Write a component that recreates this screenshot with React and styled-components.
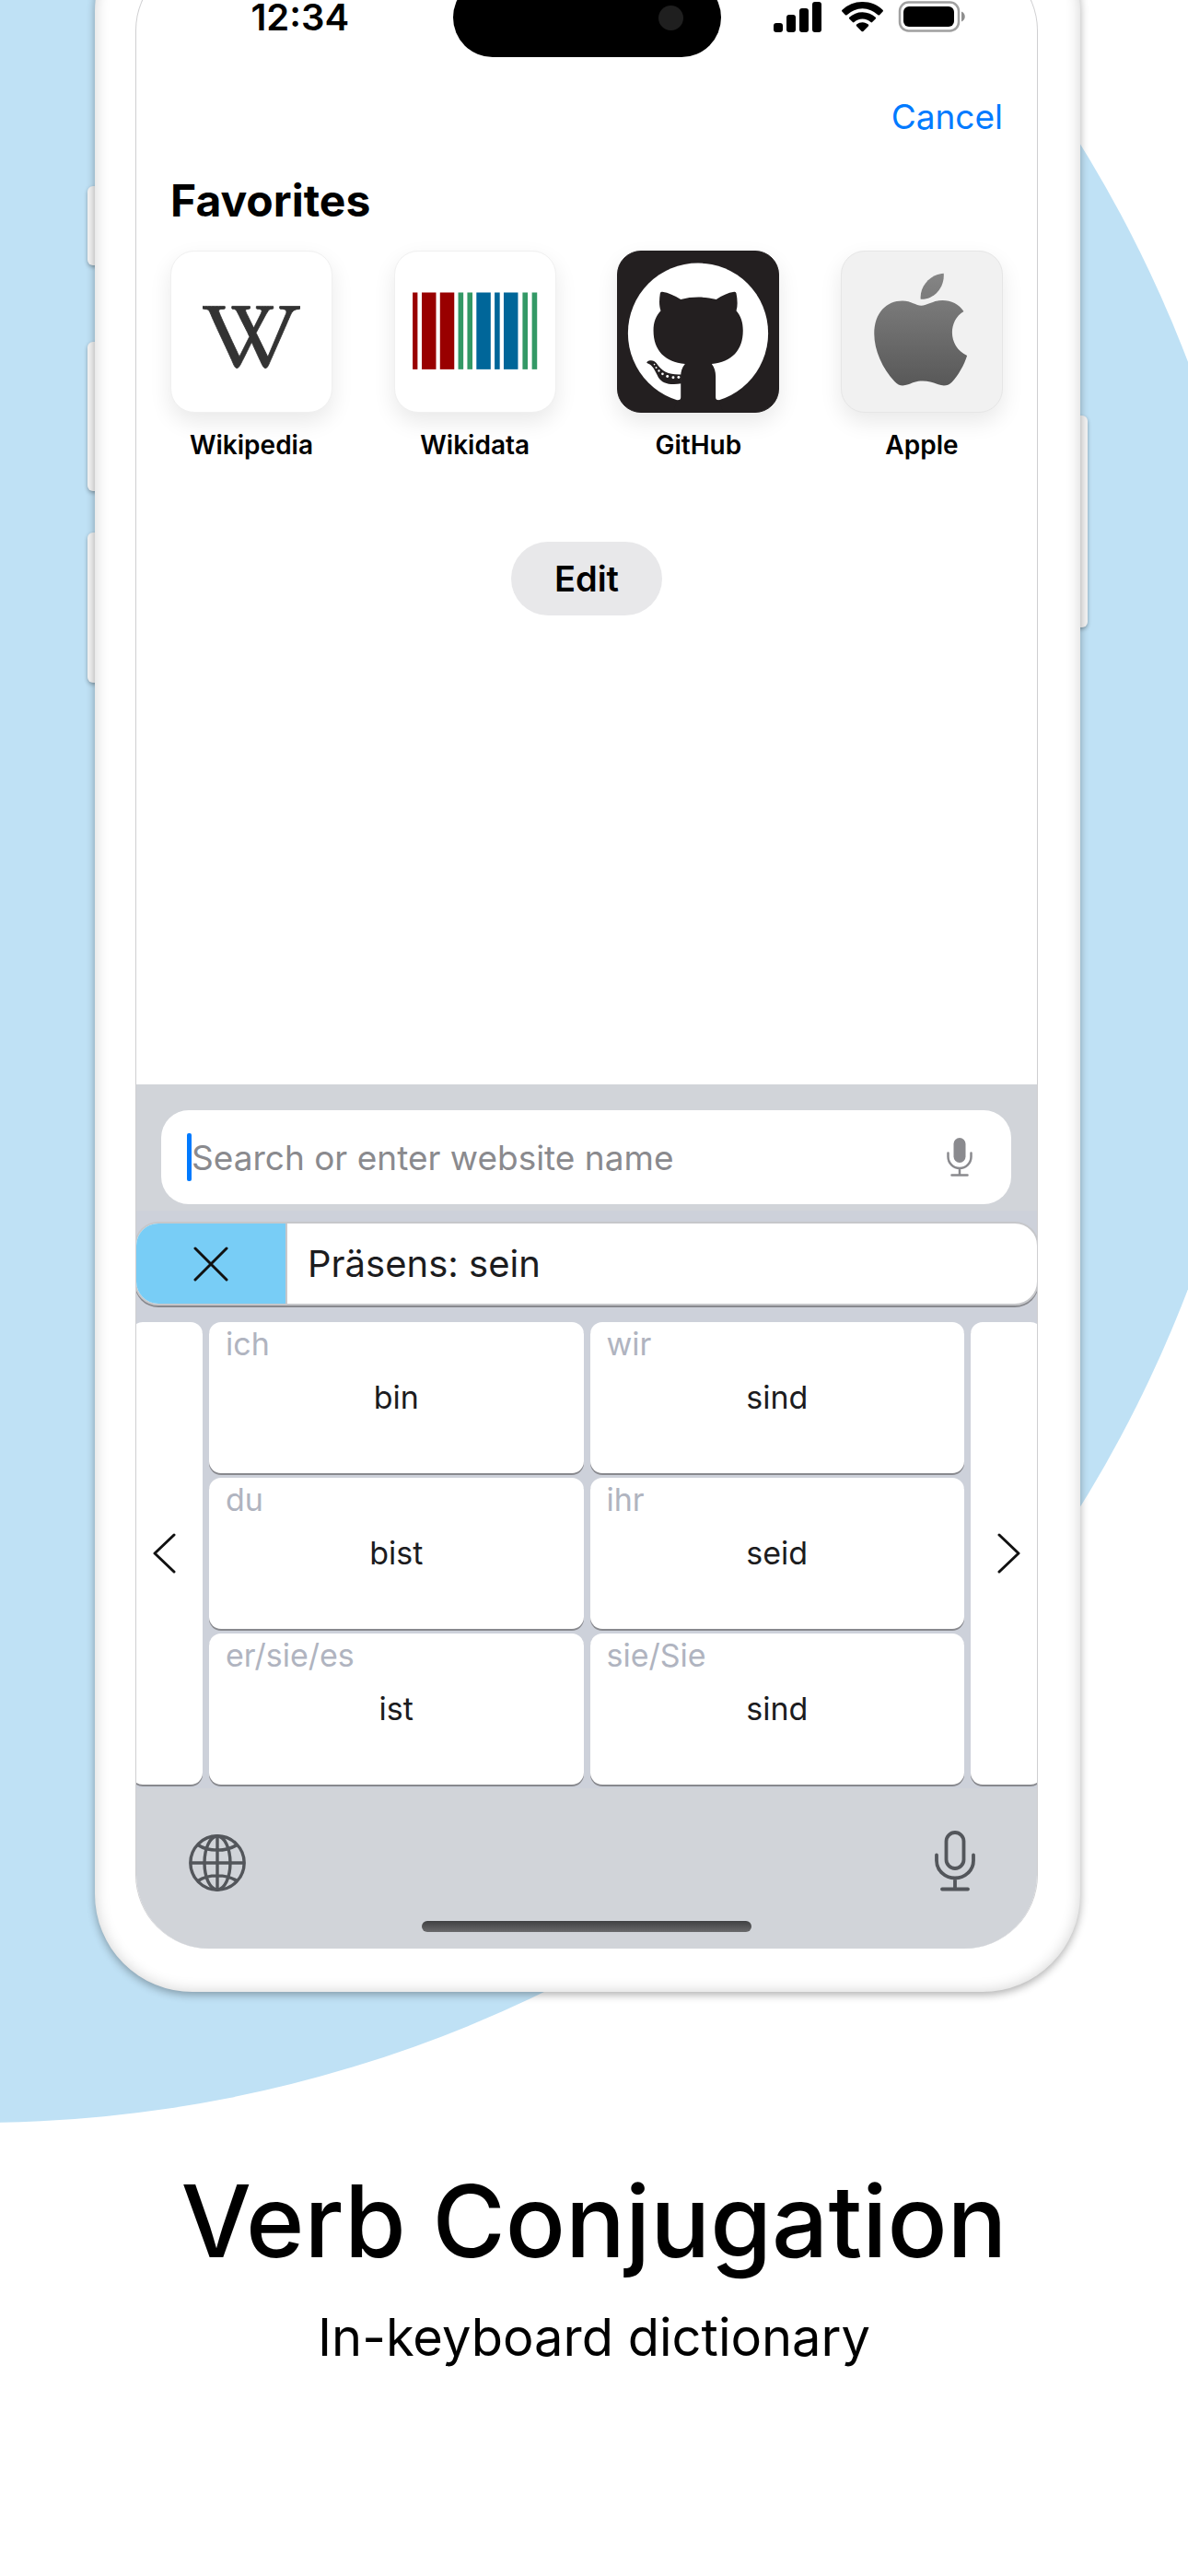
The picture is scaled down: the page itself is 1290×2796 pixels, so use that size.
import React from 'react';
import styled, { createGlobalStyle, css } from 'styled-components';
import { SiWikipedia } from 'react-icons/si';

const GlobalStyle = createGlobalStyle`
  *, *::before, *::after { box-sizing: border-box; }
  body { margin: 0; background: #fff; }
  body, button, input {
    font-family: Inter, "Liberation Sans", sans-serif;
  }
  button { border: 0; padding: 0; background: none; color: inherit; cursor: pointer; }
  svg { display: block; }
`;

const Page = styled.main`
  position: relative;
  z-index: 0;
  overflow: hidden;
  min-height: 100vh;
  padding-bottom: 120px;
  color: #000;

  &::before {
    content: '';
    position: absolute;
    z-index: -1;
    top: -512px;
    left: -1433px;
    width: 2816px;
    height: 2816px;
    border-radius: 50%;
    background: #bfe1f5;
  }
`;

const Phone = styled.section`
  position: relative;
  margin: -94px 117px 0 103px;
  padding: 47px 46px 47px 44px;
  border-radius: 106px;
  background: #fff;
  box-shadow:
    inset 0 0 16px rgba(0, 0, 0, 0.18),
    0 3px 10px rgba(0, 0, 0, 0.32);
`;

const SideButton = styled.span`
  position: absolute;
  z-index: -1;
  top: ${(p) => p.$top}px;
  ${(p) => p.$side}: -8px;
  width: 16px;
  height: ${(p) => p.$height}px;
  border-radius: 6px;
  background: #f3f3f3;
  box-shadow: 0 2px 4px rgba(0, 0, 0, 0.3);
`;

const Screen = styled.div`
  overflow: hidden;
  border: 1px solid #cfcfd1;
  border-bottom-width: 0;
  border-radius: 80px;
  background: #fff;
`;

const StatusBar = styled.header`
  display: grid;
  grid-template-columns: 1fr 291px 1fr;
  align-items: center;
  padding-top: 22px;
`;

const Clock = styled.time`
  padding-left: 12px;
  text-align: center;
  font-size: 40px;
  line-height: 36px;
  font-weight: 600;
`;

const Island = styled.div`
  display: flex;
  align-items: center;
  justify-content: flex-end;
  height: 86px;
  padding-right: 41px;
  border-radius: 43px;
  background: #000;
`;

const Camera = styled.span`
  width: 27px;
  height: 27px;
  border-radius: 50%;
  background: #1f1f1f;
`;

const StatusIcons = styled.div`
  display: flex;
  justify-content: center;
  padding-right: 20px;
`;

const Browser = styled.div`
  display: flex;
  flex-direction: column;
  min-height: 1115px;
  padding: 41px 37px 0;
`;

const CancelButton = styled.button`
  align-self: flex-end;
  color: #007aff;
  font-size: 37px;
  line-height: 48px;
`;

const SectionTitle = styled.h2`
  margin: 37px 0 24px;
  font-size: 48px;
  line-height: 60px;
  font-weight: 700;
`;

const Favorites = styled.nav`
  display: flex;
  justify-content: space-between;
`;

const Favorite = styled.a`
  display: flex;
  flex-direction: column;
  align-items: center;
  gap: 19px;
  width: 176px;
  color: #000;
  text-decoration: none;
  font-size: 28px;
  line-height: 32px;
  font-weight: 600;
`;

const Tile = styled.span`
  display: flex;
  align-items: center;
  justify-content: center;
  overflow: hidden;
  width: 176px;
  height: 176px;
  border: 1px solid ${(p) => p.$edge};
  border-radius: 26px;
  background: ${(p) => p.$fill};
  box-shadow: 0 10px 24px rgba(0, 0, 0, 0.09);
`;

const WikipediaLogo = styled(SiWikipedia)`
  width: 106px;
  height: 106px;
  margin-top: 12px;
  color: #333;
  stroke: #333;
  stroke-width: 0.2px;
`;

const EditButton = styled.button`
  align-self: center;
  width: 164px;
  height: 80px;
  margin-top: 89px;
  border-radius: 40px;
  background: #e8e8ea;
  font-size: 38px;
  line-height: 48px;
  font-weight: 600;
`;

const SearchArea = styled.div`
  padding: 28px 28px 7px 27px;
  background: #d1d4d9;
`;

const SearchBox = styled.div`
  display: flex;
  align-items: center;
  height: 102px;
  padding: 0 42px 0 28px;
  border-radius: 30px;
  background: #fff;
`;

const Caret = styled.span`
  width: 5px;
  height: 52px;
  border-radius: 2px;
  background: #007aff;
`;

const SearchInput = styled.input`
  flex: 1;
  min-width: 0;
  height: 52px;
  padding: 0;
  border: 0;
  outline: 0;
  background: none;
  color: #000;
  font-size: 37px;

  &::placeholder { color: #8a8a8e; opacity: 1; }
`;

const KeyArea = styled.div`
  padding: 12px 0 4px;
  background: #cdd1da;
`;

const CommandBar = styled.div`
  display: flex;
  height: 91px;
  margin: 0 -2px 18px;
  overflow: hidden;
  border: 2px solid #c6c7ca;
  border-radius: 26px;
  background: #fff;
  box-shadow: 0 2px 0 #88898e;
`;

const CloseButton = styled.button`
  display: flex;
  align-items: center;
  justify-content: center;
  width: 164px;
  border-right: 2px solid #c6c7ca;
  background: #78cdf6;
`;

const CommandText = styled.p`
  margin: 0;
  padding-left: 22px;
  color: #1c1c1e;
  font-size: 40px;
  line-height: 87px;
`;

const KeyGrid = styled.div`
  display: grid;
  grid-template-columns: 78px 1fr 1fr 78px;
  grid-template-rows: repeat(3, 164px);
  gap: 5px 7px;
  margin: 0 -6px;
`;

const keyFace = css`
  border-radius: 13px;
  background: #fff;
  box-shadow: 0 2px 0 #88898e;
  color: #1c1c1e;
`;

const PageKey = styled.button`
  ${keyFace}
  grid-row: 1 / -1;
  grid-column: ${(p) => p.$column};
  display: flex;
  align-items: center;
  justify-content: center;
`;

const FormKey = styled.button`
  ${keyFace}
  display: grid;
  grid-template-rows: 48px 68px 48px;
  font-size: 34px;
`;

const Pronoun = styled.span`
  padding-left: 18px;
  color: #b0b4c0;
  text-align: left;
  line-height: 48px;
`;

const VerbForm = styled.span`
  line-height: 68px;
`;

const Dock = styled.footer`
  display: flex;
  flex-direction: column;
  align-items: center;
  gap: 32px;
  padding: 46px 0 18px;
  background: #d1d4d9;
`;

const DockRow = styled.div`
  display: flex;
  align-items: flex-end;
  justify-content: space-between;
  align-self: stretch;
  padding: 0 67px 0 57px;
  color: #53565b;
`;

const HomeBar = styled.span`
  width: 358px;
  height: 12px;
  border-radius: 6px;
  background: linear-gradient(#3f4042, #69696b);
`;

const Caption = styled.div`
  display: flex;
  flex-direction: column;
  gap: 20px;
  padding-top: 179px;
  text-align: center;
`;

const Title = styled.h1`
  margin: 0;
  font-size: 108px;
  line-height: 140px;
  font-weight: 500;
`;

const Subtitle = styled.p`
  margin: 0;
  font-size: 56px;
  line-height: 72px;
`;

const SignalIcons = () => (
  <svg width="208" height="36" viewBox="841 1 208 36" aria-hidden="true">
    <rect x="841" y="25" width="10" height="10" rx="3" />
    <rect x="855" y="16" width="10" height="19" rx="3" />
    <rect x="869" y="9" width="10" height="26" rx="3" />
    <rect x="883" y="2" width="10" height="33" rx="3" />
    <path d="M937.5 2c8.700 0 16.400 3.300 22 8.800.6.600.6 1.200.1 1.800l-3.500 3.600c-.5.500-1.200.5-1.700 0a24.300 24.300 0 0 0-33.800 0c-.5.500-1.200.5-1.700 0l-3.500-3.600c-.5-.6-.5-1.200.1-1.800A31.300 31.300 0 0 1 937.500 2Z" />
    <path d="M937.500 13.200c5.500 0 10.500 2.100 14.200 5.600.5.500.5 1.200 0 1.700l-3.600 3.600c-.5.500-1.100.5-1.600 0a13 13 0 0 0-18 0c-.5.500-1.100.5-1.600 0l-3.600-3.600c-.5-.5-.5-1.200 0-1.700a20.600 20.600 0 0 1 14.200-5.600Z" />
    <path d="M937.500 24.200c2.500 0 4.700.9 6.400 2.400.5.500.5 1.100.1 1.600l-5.600 5.700c-.5.600-1.200.6-1.800 0l-5.600-5.700c-.4-.5-.4-1.100.1-1.600a9.700 9.700 0 0 1 6.400-2.400Z" />
    <rect x="978" y="2.500" width="64" height="31" rx="9.500" fill="none" stroke="#a0a0a0" strokeWidth="2.500" />
    <rect x="982" y="7" width="55" height="22" rx="6" />
    <path d="M1045 12.500c5 2 5 9 0 11Z" fill="#8e8e8e" />
  </svg>
);

const BARS = [
  [831, 16, '#990000'], [861, 47, '#990000'], [921, 47, '#990000'],
  [981, 17, '#339966'], [1011, 17, '#339966'],
  [1041, 47, '#006699'], [1101, 17, '#006699'], [1131, 47, '#006699'],
  [1193, 17, '#339966'], [1224, 17, '#339966'],
];

const WikidataLogo = () => (
  <svg width="176" height="176" viewBox="773 65 528 528" aria-hidden="true">
    {BARS.map(([x, w, c]) => (
      <rect key={x} x={x} y="200" width={w} height="253" fill={c} />
    ))}
  </svg>
);

const GitHubLogo = () => (
  <svg width="176" height="176" viewBox="91 65 528 528" fill="#231f20" aria-hidden="true">
    <circle cx="355" cy="334" r="231" fill="#fff" />
    <path d="M237 198C258 201 277 210 298 223C335 213 377 213 415 223C434 210 453 201 474 198Q480 197 481 203C485 224 486 243 481 260C496 277 503 298 503 325C503 390 466 429 400 435C409 447 413 460 413 476V545Q413 555 424 554L440 600H270L287 554Q298 555 298 545V476C298 460 302 447 312 435C245 429 208 390 208 325C208 298 216 277 232 260C226 243 227 224 230 203Q231 197 237 198Z" />
    <path d="M187 428C196 422 210 422 218 433C236 462 262 472 300 470V500C262 506 236 499 224 479C213 458 207 440 188 433Q184 431 187 428Z" />
    <g fill="#fff">
      <circle cx="211" cy="437" r="2.500" /><circle cx="217" cy="447" r="3" />
      <circle cx="226" cy="458" r="3.500" /><circle cx="238" cy="468" r="4" />
      <circle cx="254" cy="476" r="4.500" /><circle cx="273" cy="480" r="4.500" />
      <circle cx="291" cy="479" r="4.500" />
    </g>
  </svg>
);

const AppleLogo = () => (
  <svg width="176" height="176" viewBox="821 65 528 528" fill="url(#appleShade)" aria-hidden="true">
    <defs>
      <linearGradient id="appleShade" gradientUnits="userSpaceOnUse" x1="0" y1="137" x2="0" y2="507">
        <stop offset="0" stopColor="#858585" />
        <stop offset="1" stopColor="#585858" />
      </linearGradient>
    </defs>
    <path d="M1083 243C1104 243 1122 226 1153 226C1182 226 1207 239 1223 262C1170 293 1171 380 1234 408C1226 436 1204 475 1184 495C1171 508 1156 509 1139 503C1120 495 1108 491 1088 491C1066 491 1054 497 1040 503C1022 509 1009 508 995 493C955 450 928 391 928 336C928 266 969 227 1021 227C1050 227 1066 243 1083 243Z" />
    <path d="M1157 137C1161 185 1124 224 1081 222C1077 178 1115 139 1157 137Z" />
  </svg>
);

const MicFilled = () => (
  <svg width="28" height="42" viewBox="0 0 28 42" fill="none" stroke="#8a8a8e" strokeWidth="2.500" strokeLinecap="round" aria-hidden="true">
    <rect x="7.500" y="0" width="13" height="27" rx="6.500" fill="#8a8a8e" stroke="none" />
    <path d="M1.500 16.500v4a12.500 12.500 0 0 0 25 0v-4M14 33v7M5.500 40.500h17" />
  </svg>
);

const MicOutline = () => (
  <svg width="44" height="66" viewBox="0 0 44 66" fill="none" stroke="currentColor" strokeWidth="3.800" strokeLinecap="round" aria-hidden="true">
    <rect x="12.500" y="2" width="19" height="39" rx="9.500" />
    <path d="M2 26.500v6a20 19 0 0 0 40 0v-6M22 52v11M8 63.500h28" />
  </svg>
);

const Globe = () => (
  <svg width="62" height="62" viewBox="0 0 62 62" fill="none" stroke="currentColor" strokeWidth="3.400" aria-hidden="true">
    <circle cx="31" cy="31" r="29.200" />
    <ellipse cx="31" cy="31" rx="14" ry="29" />
    <path d="M31 2v58M2 31h58M10 11.500c11 7.500 31 7.500 42 0M10 50.500c11-7.500 31-7.500 42 0" />
  </svg>
);

const Cross = () => (
  <svg width="38" height="38" viewBox="0 0 38 38" stroke="#111" strokeWidth="3" strokeLinecap="round" aria-hidden="true">
    <path d="M2 2l34 34M36 2L2 36" />
  </svg>
);

const Chevron = ({ path }) => (
  <svg width="32" height="44" viewBox="0 0 32 44" fill="none" stroke="#111" strokeWidth="3" strokeLinecap="round" strokeLinejoin="round" aria-hidden="true">
    <path d={path} />
  </svg>
);

const FAVORITES = [
  { name: 'Wikipedia', fill: '#fff', edge: '#f0f0f0', logo: <WikipediaLogo aria-hidden="true" /> },
  { name: 'Wikidata', fill: '#fff', edge: '#f0f0f0', logo: <WikidataLogo /> },
  { name: 'GitHub', fill: '#231f20', edge: '#231f20', logo: <GitHubLogo /> },
  { name: 'Apple', fill: '#f1f1f1', edge: '#e6e6e6', logo: <AppleLogo /> },
];

const FORMS = [
  ['ich', 'bin'], ['wir', 'sind'],
  ['du', 'bist'], ['ihr', 'seid'],
  ['er/sie/es', 'ist'], ['sie/Sie', 'sind'],
];

export default function App() {
  return (
    <Page>
      <GlobalStyle />
      <Phone>
        <SideButton $side="left" $top={296} $height={86} />
        <SideButton $side="left" $top={465} $height={162} />
        <SideButton $side="left" $top={672} $height={163} />
        <SideButton $side="right" $top={545} $height={230} />
        <Screen>
          <StatusBar>
            <Clock>12:34</Clock>
            <Island><Camera /></Island>
            <StatusIcons><SignalIcons /></StatusIcons>
          </StatusBar>

          <Browser>
            <CancelButton type="button">Cancel</CancelButton>
            <SectionTitle>Favorites</SectionTitle>
            <Favorites aria-label="Favorites">
              {FAVORITES.map((f) => (
                <Favorite key={f.name} href={`#${f.name}`}>
                  <Tile $fill={f.fill} $edge={f.edge}>{f.logo}</Tile>
                  {f.name}
                </Favorite>
              ))}
            </Favorites>
            <EditButton type="button">Edit</EditButton>
          </Browser>

          <SearchArea>
            <SearchBox>
              <Caret />
              <SearchInput type="text" aria-label="Search" placeholder="Search or enter website name" />
              <button type="button" aria-label="Dictate search"><MicFilled /></button>
            </SearchBox>
          </SearchArea>

          <KeyArea>
            <CommandBar>
              <CloseButton type="button" aria-label="Close"><Cross /></CloseButton>
              <CommandText>Präsens: sein</CommandText>
            </CommandBar>
            <KeyGrid>
              <PageKey type="button" $column="1" aria-label="Previous tense">
                <Chevron path="M24 2L3 22l21 20" />
              </PageKey>
              {FORMS.map(([pronoun, form]) => (
                <FormKey type="button" key={pronoun}>
                  <Pronoun>{pronoun}</Pronoun>
                  <VerbForm>{form}</VerbForm>
                </FormKey>
              ))}
              <PageKey type="button" $column="4" aria-label="Next tense">
                <Chevron path="M8 2l21 20L8 42" />
              </PageKey>
            </KeyGrid>
          </KeyArea>

          <Dock>
            <DockRow>
              <button type="button" aria-label="Next keyboard"><Globe /></button>
              <button type="button" aria-label="Dictate"><MicOutline /></button>
            </DockRow>
            <HomeBar />
          </Dock>
        </Screen>
      </Phone>

      <Caption>
        <Title>Verb Conjugation</Title>
        <Subtitle>In-keyboard dictionary</Subtitle>
      </Caption>
    </Page>
  );
}
